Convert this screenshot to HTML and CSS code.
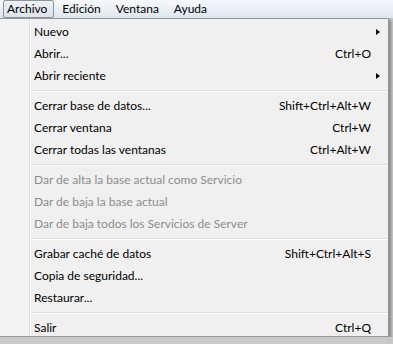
FILE: index.html
```html
<!DOCTYPE html>
<html lang="es">
<head>
  <meta charset="UTF-8">
  <meta name="viewport" content="width=device-width, initial-scale=1.0">
  <title>Archivo</title>
  <link rel="stylesheet" href="styles.css">
</head>
<body>
  <div class="menubar">
    <span class="top active">Archivo</span>
    <span class="top">Edición</span>
    <span class="top">Ventana</span>
    <span class="top">Ayuda</span>
  </div>

  <div class="menu">
    <div class="item"><span>Nuevo</span><span></span><span class="arrow"></span></div>
    <div class="item"><span>Abrir...</span><span class="key">Ctrl+O</span><span></span></div>
    <div class="item"><span>Abrir reciente</span><span></span><span class="arrow"></span></div>
    <div class="sep"></div>
    <div class="item"><span>Cerrar base de datos...</span><span class="key">Shift+Ctrl+Alt+W</span><span></span></div>
    <div class="item"><span>Cerrar ventana</span><span class="key">Ctrl+W</span><span></span></div>
    <div class="item"><span>Cerrar todas las ventanas</span><span class="key">Ctrl+Alt+W</span><span></span></div>
    <div class="sep"></div>
    <div class="item disabled"><span>Dar de alta la base actual como Servicio</span><span></span><span></span></div>
    <div class="item disabled"><span>Dar de baja la base actual</span><span></span><span></span></div>
    <div class="item disabled"><span>Dar de baja todos los Servicios de Server</span><span></span><span></span></div>
    <div class="sep"></div>
    <div class="item"><span>Grabar caché de datos</span><span class="key">Shift+Ctrl+Alt+S</span><span></span></div>
    <div class="item"><span>Copia de seguridad...</span><span></span><span></span></div>
    <div class="item"><span>Restaurar...</span><span></span><span></span></div>
    <div class="sep"></div>
    <div class="item"><span>Salir</span><span class="key">Ctrl+Q</span><span></span></div>
  </div>
</body>
</html>
```

FILE: styles.css
```css
body {
  margin: 0;
  background: #c9c9c9;
  font-family: Lato, "Liberation Sans", sans-serif;
  font-size: 12px;
  color: #000;
  overflow: hidden;
}

.menubar {
  height: 18px;
  display: flex;
  align-items: center;
  padding-left: 3px;
  background: linear-gradient(#f7f9fc, #dfe6ef);
}

.top {
  height: 16px;
  line-height: 16px;
  padding: 0 6px 0 3px;
  margin-right: 4px;
  border: 1px solid transparent;
  border-radius: 2px;
}

.top.active {
  border-color: #8f949b;
  background: linear-gradient(#eef1f5, #dde3ea);
}

.menu {
  box-sizing: border-box;
  width: 390px;
  margin-left: -1px;
  padding-top: 2px;
  border: 1px solid #979797;
  background: linear-gradient(to right, #f3f3f3 0 29px, #e0e1e1 29px 30px, #fff 30px 31px, #f0f0f0 31px);
  box-shadow: 2px 2px 3px rgba(0, 0, 0, 0.35);
}

.item {
  display: grid;
  grid-template-columns: 1fr auto 17px;
  height: 22px;
  line-height: 22px;
  padding-left: 34px;
  white-space: nowrap;
}

.item:last-child {
  height: 19px;
}

.item.disabled {
  color: #8d8d8d;
}

.arrow {
  width: 0;
  height: 0;
  margin: 8px 0 0 5px;
  border-top: 3.5px solid transparent;
  border-bottom: 3.5px solid transparent;
  border-left: 4px solid #000;
}

.sep {
  height: 8px;
  margin-left: 31px;
  margin-right: 1px;
  background: linear-gradient(#f0f0f0 0 3px, #e0e0e0 3px 4px, #fff 4px 5px, #f0f0f0 5px);
}
```
